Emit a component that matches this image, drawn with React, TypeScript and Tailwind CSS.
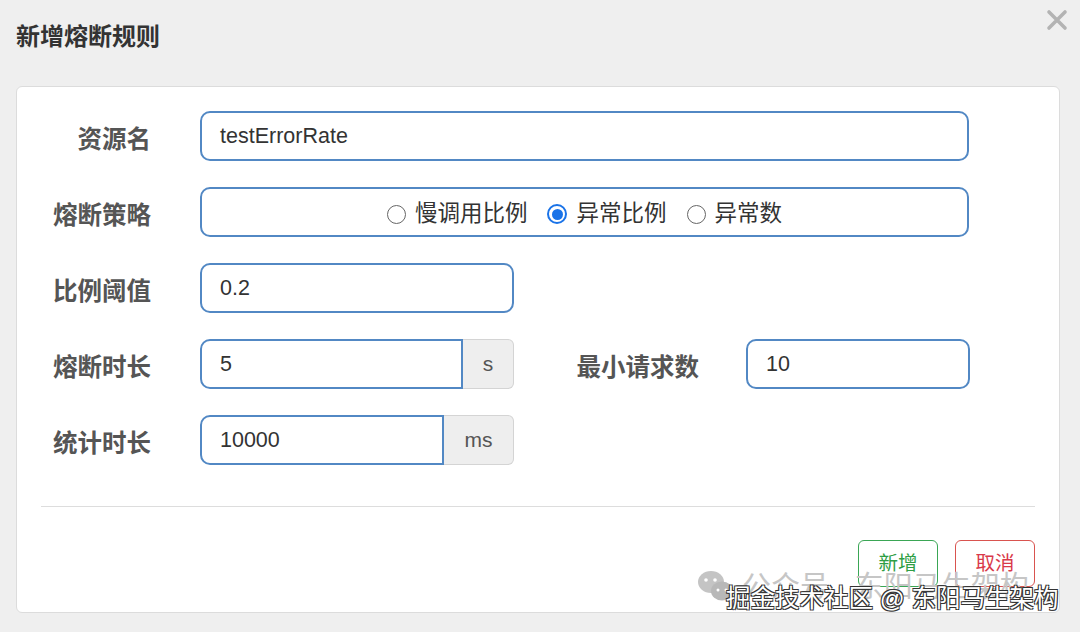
import type { ReactNode } from 'react';

const FONT = "font-['Liberation_Sans','Noto_Sans_CJK_SC',sans-serif]";

function Label({ children, className = 'w-[134px]' }: { children: ReactNode; className?: string }) {
  return (
    <div className={`${className} shrink-0 pt-[8px] text-right text-[24.5px] font-bold text-[#555]`}>{children}</div>
  );
}

function Field({ value, className }: { value: string; className: string }) {
  return (
    <div
      className={`${className} flex h-[50px] shrink-0 items-center rounded-[10px] border-2 border-[#5288c4] bg-white px-[18px] text-[21.5px] text-[#333]`}
    >
      {value}
    </div>
  );
}

function FieldWithUnit({ value, unit, inputWidth }: { value: string; unit: string; inputWidth: string }) {
  return (
    <div className="flex h-[50px] w-[314px] shrink-0">
      <div
        className={`${inputWidth} flex items-center rounded-l-[10px] border-2 border-[#5288c4] bg-white px-[18px] text-[21.5px] text-[#333]`}
      >
        {value}
      </div>
      <div className="flex flex-1 items-center justify-center rounded-r-[6px] border border-l-0 border-[#d4d4d4] bg-[#eeeeee] text-[21px] text-[#555]">
        {unit}
      </div>
    </div>
  );
}

function Radio({ label, checked }: { label: string; checked?: boolean }) {
  return (
    <div className="flex items-center gap-[9px]">
      {checked ? (
        <span className="flex h-[20px] w-[20px] items-center justify-center rounded-full border-2 border-[#1a73e8] bg-white">
          <span className="h-[11px] w-[11px] rounded-full bg-[#1a73e8]" />
        </span>
      ) : (
        <span className="h-[19px] w-[19px] rounded-full border border-[#666] bg-white" />
      )}
      <span className="text-[22.5px] text-[#333]">{label}</span>
    </div>
  );
}

export default function App() {
  return (
    <div className={`${FONT} relative h-[632px] w-full overflow-hidden bg-[#efefef]`}>
      <div className="flex items-start justify-between pl-[16px] pr-[12px]">
        <h1 className="pt-[19px] text-[24px] font-bold text-[#333]">新增熔断规则</h1>
        <svg width="22" height="22" viewBox="0 0 22 22" className="mt-[9px]">
          <path d="M3 3 L19 19 M19 3 L3 19" stroke="#b3b3b3" strokeWidth="3.6" strokeLinecap="round" />
        </svg>
      </div>

      <div className="ml-[16px] mr-[20px] mt-[31px] h-[527px] rounded-[6px] border border-[#dcdcdc] bg-white">
        <div className="flex flex-col gap-[26px] pt-[24px]">
          <div className="flex items-center gap-[49px]">
            <Label>资源名</Label>
            <Field value="testErrorRate" className="w-[769px]" />
          </div>

          <div className="flex items-center gap-[49px]">
            <Label>熔断策略</Label>
            <div className="flex h-[50px] w-[769px] items-center justify-center gap-[20px] rounded-[10px] border-2 border-[#5288c4] bg-white pt-[4px]">
              <Radio label="慢调用比例" />
              <Radio label="异常比例" checked />
              <Radio label="异常数" />
            </div>
          </div>

          <div className="flex items-center gap-[49px]">
            <Label>比例阈值</Label>
            <Field value="0.2" className="w-[314px]" />
          </div>

          <div className="flex items-center">
            <Label>熔断时长</Label>
            <div className="ml-[49px]">
              <FieldWithUnit value="5" unit="s" inputWidth="w-[263px]" />
            </div>
            <Label className="w-[185px]">最小请求数</Label>
            <Field value="10" className="ml-[47px] w-[224px]" />
          </div>

          <div className="flex items-center gap-[49px]">
            <Label>统计时长</Label>
            <FieldWithUnit value="10000" unit="ms" inputWidth="w-[244px]" />
          </div>
        </div>

        <div className="mx-[24px] mt-[41px] border-t border-[#dddddd]" />

        <div className="mr-[24px] mt-[33px] flex justify-end gap-[17px]">
          <button className="h-[47px] w-[80px] rounded-[6px] border border-[#3aa655] bg-white text-[19.5px] text-[#2e9e45]">
            新增
          </button>
          <button className="h-[47px] w-[80px] rounded-[6px] border border-[#d9534f] bg-white text-[19.5px] text-[#d9394a]">
            取消
          </button>
        </div>
      </div>

      <div className="pointer-events-none absolute left-[696px] top-[569px] flex items-center gap-[6px] text-[29px] leading-none text-[#c6c6c6]">
        <svg width="40" height="36" viewBox="0 0 40 36">
          <ellipse cx="15" cy="13" rx="13" ry="11" fill="#c4c4c4" />
          <ellipse cx="26" cy="22" rx="11" ry="9.5" fill="#b8b8b8" />
          <circle cx="10" cy="11" r="1.8" fill="#fff" />
          <circle cx="19" cy="11" r="1.8" fill="#fff" />
          <circle cx="22" cy="21" r="1.5" fill="#fff" />
          <circle cx="30" cy="21" r="1.5" fill="#fff" />
        </svg>
        <span>公众号 · 东阳马生架构</span>
      </div>

      <div className="pointer-events-none absolute left-[726px] top-[581px] text-[24.5px] text-white [text-shadow:1px_1px_0_#333,-1px_-1px_0_#333,1px_-1px_0_#333,-1px_1px_0_#333]">
        掘金技术社区 @ 东阳马生架构
      </div>
    </div>
  );
}
